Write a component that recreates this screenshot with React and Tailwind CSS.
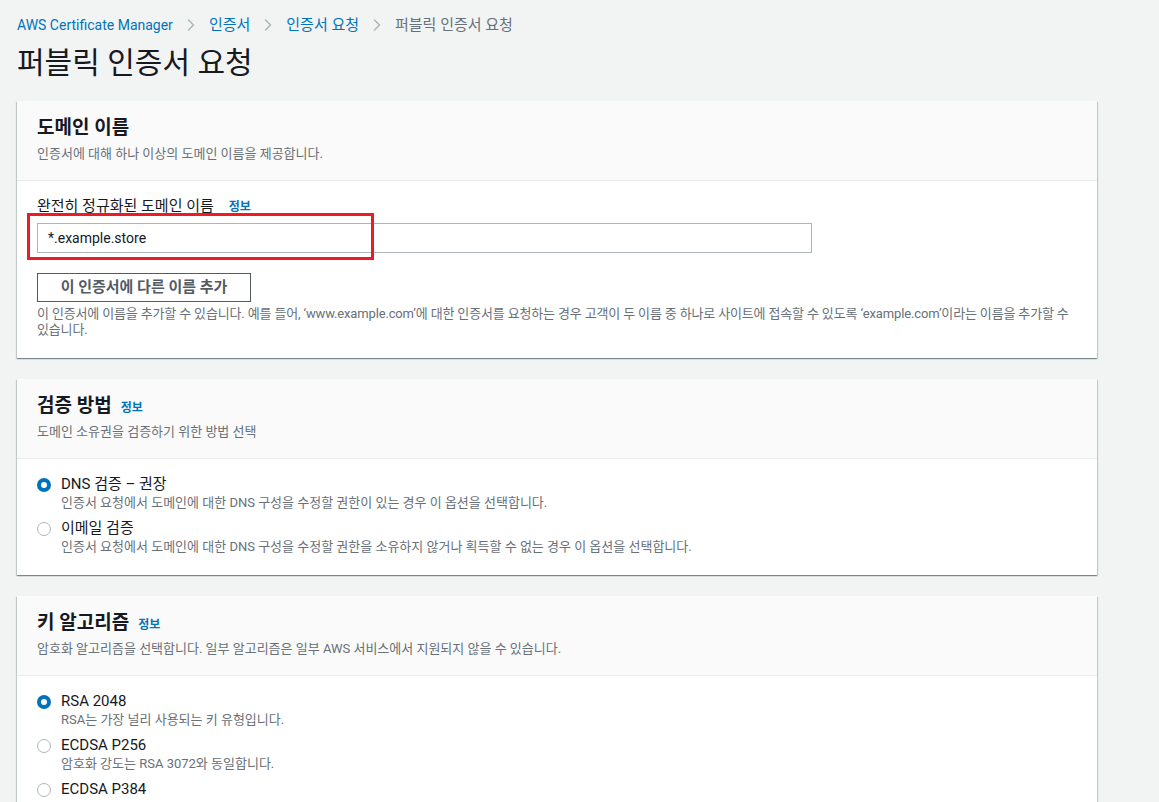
import { ChevronRight } from 'lucide-react';

const font = { fontFamily: 'Roboto, "Noto Sans CJK KR", sans-serif' };

const Radio = ({ checked }) => (
  <span
    className={
      'mt-[4px] inline-block h-[14px] w-[14px] shrink-0 rounded-full bg-white ' +
      (checked ? 'border-[4px] border-[#0073bb]' : 'border border-[#aab7b8]')
    }
  />
);

const Option = ({ checked, label, desc }) => (
  <div className="flex gap-[10px]">
    <Radio checked={checked} />
    <div>
      <div className="text-[15px] leading-[20px] text-[#16191f]">{label}</div>
      {desc && <div className="mt-[1px] text-[13px] leading-[16px] text-[#687078]">{desc}</div>}
    </div>
  </div>
);

const Card = ({ title, info, desc, children }) => (
  <section className="bg-white shadow-[0_1px_1px_0_rgba(0,28,36,0.3),1px_1px_1px_0_rgba(0,28,36,0.15),-1px_1px_1px_0_rgba(0,28,36,0.15)]">
    <div className="h-[80px] border-b border-[#eaeded] bg-[#fafafa] px-[20px] pt-[14px]">
      <div className="flex items-baseline gap-[9px]">
        <h2 className="text-[19px] font-bold leading-[26px] text-[#16191f]">{title}</h2>
        {info && <span className="text-[12px] font-bold text-[#0073bb]">정보</span>}
      </div>
      <p className="mt-[4px] text-[13px] leading-[18px] text-[#687078]">{desc}</p>
    </div>
    {children}
  </section>
);

const Chevron = () => (
  <ChevronRight className="mx-[8px] h-[20px] w-[20px] text-[#aab7b8]" strokeWidth={1.75} />
);

export default function App() {
  return (
    <div className="h-[802px] overflow-hidden bg-[#f2f3f3] px-[17px] pt-[15px]" style={font}>
      <nav className="flex items-center text-[15px] leading-[20px]">
        <span className="text-[14px] text-[#0073bb]">AWS Certificate Manager</span>
        <Chevron />
        <span className="text-[#0073bb]">인증서</span>
        <Chevron />
        <span className="text-[#0073bb]">인증서 요청</span>
        <Chevron />
        <span className="text-[#687078]">퍼블릭 인증서 요청</span>
      </nav>
      <h1 className="mt-[9px] text-[30px] leading-[38px] text-[#16191f]">퍼블릭 인증서 요청</h1>

      <div className="mt-[19px] flex w-[1080px] flex-col gap-[21px]">
        <Card title="도메인 이름" desc="인증서에 대해 하나 이상의 도메인 이름을 제공합니다.">
          <div className="px-[20px] pt-[15px] pb-[20px]">
            <div className="flex items-baseline gap-[15px] text-[15px] leading-[20px] text-[#16191f]">
              <span>완전히 정규화된 도메인 이름</span>
              <span className="text-[12px] font-bold text-[#0073bb]">정보</span>
            </div>
            <div className="relative mt-[6px]">
              <div className="flex h-[30px] w-[775px] items-center border border-[#aab7b8] bg-white px-[10px] text-[14px] text-[#16191f]">
                *.example.store
              </div>
              <div className="pointer-events-none absolute left-[-10px] top-[-10px] h-[47px] w-[347px] border-[3px] border-[#ec1c24]" />
            </div>
            <button className="mt-[20px] h-[29px] w-[214px] border border-[#545b64] bg-white text-[15px] font-bold text-[#545b64]">
              이 인증서에 다른 이름 추가
            </button>
            <p className="mt-[4px] text-[13px] leading-[16px] tracking-[-0.15px] text-[#687078]">
              이 인증서에 이름을 추가할 수 있습니다. 예를 들어, ‘www.example.com’에 대한 인증서를 요청하는 경우 고객이 두 이름 중 하나로 사이트에 접속할 수 있도록 ‘example.com’이라는 이름을 추가할 수 있습니다.
            </p>
          </div>
        </Card>

        <Card title="검증 방법" info desc="도메인 소유권을 검증하기 위한 방법 선택">
          <div className="flex flex-col gap-[7px] px-[20px] pt-[15px] pb-[20px]">
            <Option checked label="DNS 검증 – 권장" desc="인증서 요청에서 도메인에 대한 DNS 구성을 수정할 권한이 있는 경우 이 옵션을 선택합니다." />
            <Option label="이메일 검증" desc="인증서 요청에서 도메인에 대한 DNS 구성을 수정할 권한을 소유하지 않거나 획득할 수 없는 경우 이 옵션을 선택합니다." />
          </div>
        </Card>

        <Card title="키 알고리즘" info desc="암호화 알고리즘을 선택합니다. 일부 알고리즘은 일부 AWS 서비스에서 지원되지 않을 수 있습니다.">
          <div className="flex flex-col gap-[7px] px-[20px] pt-[15px] pb-[20px]">
            <Option checked label="RSA 2048" desc="RSA는 가장 널리 사용되는 키 유형입니다." />
            <Option label="ECDSA P256" desc="암호화 강도는 RSA 3072와 동일합니다." />
            <Option label="ECDSA P384" />
          </div>
        </Card>
      </div>
    </div>
  );
}
